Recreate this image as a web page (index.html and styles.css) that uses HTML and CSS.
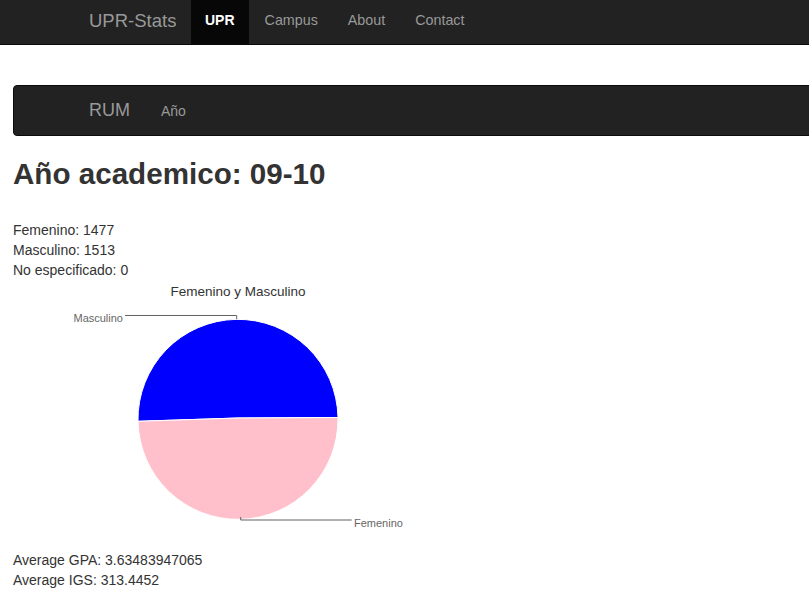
FILE: index.html
```html
<!DOCTYPE html>
<html lang="es">
<head>
<meta charset="utf-8">
<title>UPR-Stats</title>
<link rel="stylesheet" href="styles.css">
</head>
<body>
<header class="topbar">
  <div class="topbar-inner">
    <a class="brand" href="#">UPR-Stats</a>
    <ul class="nav">
      <li class="active"><a href="#">UPR</a></li>
      <li><a href="#">Campus</a></li>
      <li><a href="#">About</a></li>
      <li><a href="#">Contact</a></li>
    </ul>
  </div>
</header>
<main class="page">
  <nav class="subbar">
    <a class="sub-brand" href="#">RUM</a>
    <a class="sub-link" href="#">Año</a>
  </nav>
  <h2 class="title">Año academico: 09-10</h2>
  <div class="stats">
    <div>Femenino: 1477</div>
    <div>Masculino: 1513</div>
    <div>No especificado: 0</div>
  </div>
  <svg class="chart" width="400" height="270" viewBox="0 0 400 270">
    <text x="225" y="16" text-anchor="middle" class="chart-title">Femenino y Masculino</text>
    <path d="M225,138 L325,137.5 A100,100 0 1,0 125,141.3 Z" fill="#0000ff" stroke="#ffffff" stroke-width="1"/>
    <path d="M225,138 L125,141.3 A100,100 0 0,0 325,137.5 Z" fill="#ffc0cb" stroke="#ffffff" stroke-width="1"/>
    <path d="M112,35.5 H223.7 V39" fill="none" stroke="#636363" stroke-width="1"/>
    <text x="110" y="41.5" text-anchor="end" class="chart-label">Masculino</text>
    <path d="M227.7,237 V240 H338.7" fill="none" stroke="#636363" stroke-width="1"/>
    <text x="341" y="246.5" class="chart-label">Femenino</text>
  </svg>
  <div class="stats">
    <div>Average GPA: 3.63483947065</div>
    <div>Average IGS: 313.4452</div>
  </div>
</main>
</body>
</html>
```
FILE: styles.css
```css
html { overflow: hidden; }
body {
  margin: 0;
  font-family: "Liberation Sans", Arial, Helvetica, sans-serif;
  font-size: 14px;
  line-height: 20px;
  color: #333333;
  background: #ffffff;
}
a { text-decoration: none; }

.topbar {
  background: #222222;
  border-bottom: 1px solid #090909;
  height: 44px;
}
.topbar-inner {
  display: flex;
  align-items: stretch;
  height: 44px;
  padding-left: 89px;
}
.brand {
  display: flex;
  align-items: center;
  font-size: 18.5px;
  color: #999999;
  width: 102px;
  padding-bottom: 3px;
  box-sizing: border-box;
}
.nav {
  display: flex;
  list-style: none;
  margin: 0;
  padding: 0;
}
.nav li a {
  display: flex;
  align-items: center;
  height: 44px;
  padding: 0 15px 4px;
  color: #999999;
  font-size: 14.3px;
  box-sizing: border-box;
}
.nav li.active a {
  background: #070707;
  color: #ffffff;
  font-weight: bold;
  font-size: 14px;
  padding: 0 14px 4px;
}
.nav li.active + li a {
  padding-left: 16px;
}

.page {
  padding: 40px 0 0 13px;
}
.subbar {
  display: flex;
  align-items: center;
  height: 49px;
  background: #222222;
  border: 1px solid #0b0b0b;
  border-radius: 4px;
  margin-right: -20px;
  padding-left: 75px;
}
.sub-brand {
  font-size: 18px;
  color: #999999;
  margin-right: 31px;
  padding-bottom: 1px;
}
.sub-link {
  font-size: 14px;
  color: #999999;
  padding-top: 1px;
}

.title {
  font-size: 29.6px;
  font-weight: bold;
  line-height: 40px;
  margin: 18px 0 26px;
  color: #333333;
}
.stats div { height: 20px; }

.chart {
  display: block;
}
.chart-title {
  font-family: "Liberation Sans", Arial, sans-serif;
  font-size: 13.5px;
  fill: #333333;
}
.chart-label {
  font-family: "Liberation Sans", Arial, sans-serif;
  font-size: 11px;
  fill: #666666;
}
```
